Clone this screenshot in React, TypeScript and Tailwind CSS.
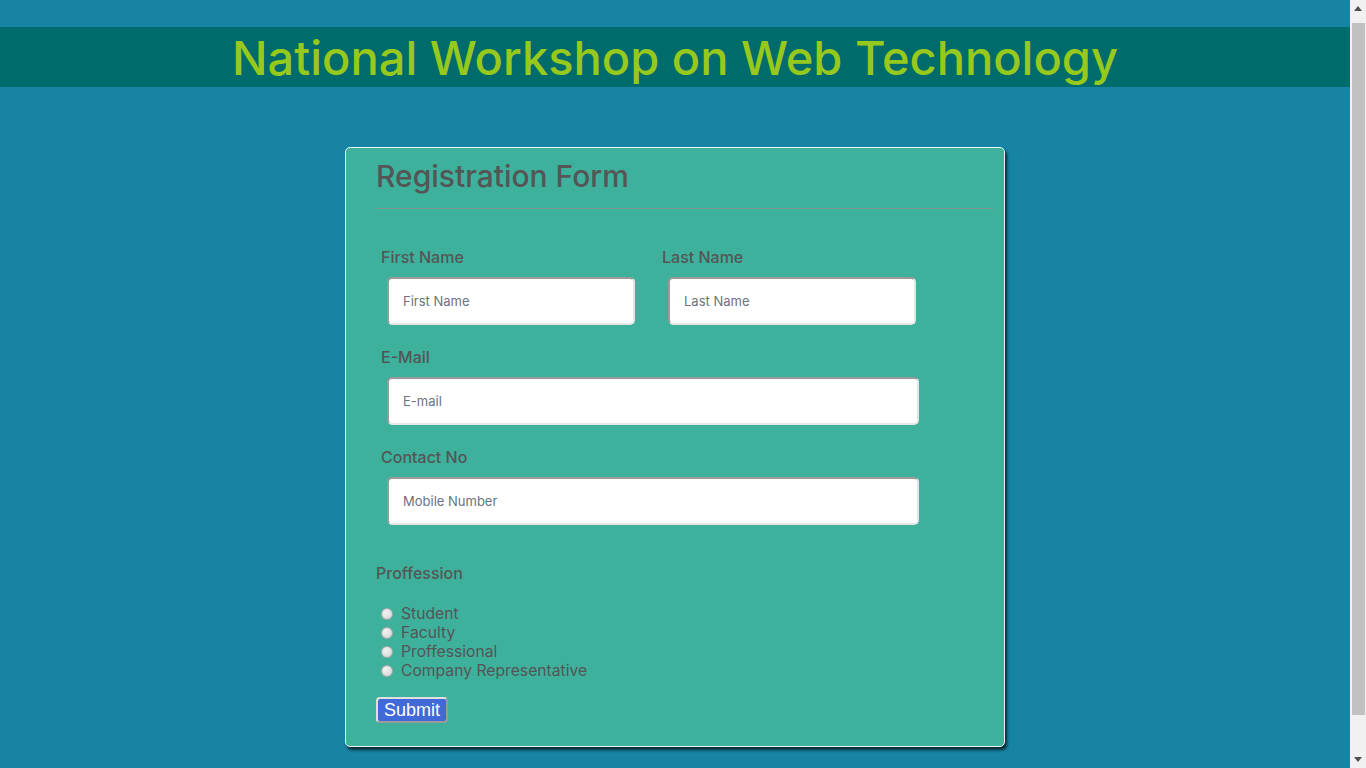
import React from 'react'

const labelCls = "block text-[16px] leading-[20px] font-medium text-[#555555] ml-[5px]"
const inputCls = "h-[48px] rounded-[5px] bg-white border-2 border-t-[#9a9a9a] border-l-[#9a9a9a] border-b-[#e6e6e6] border-r-[#e6e6e6] px-[14px] text-[13px] text-[#333] placeholder:text-[#6b7280] outline-none"

function Radio({ label }: { label: string }) {
  return (
    <label className="flex items-center h-[19px] ml-[5px]">
      <span className="w-[12px] h-[12px] rounded-full border border-[#a9a9a9] bg-[radial-gradient(circle_at_40%_35%,#f4f4f4,#cfcfcf)] mr-[8px]" />
      <span className="text-[15.7px] text-[#555555]">{label}</span>
    </label>
  )
}

function Scrollbar() {
  return (
    <div className="w-[16px] h-[768px] bg-[#f1f1f1] flex flex-col items-center shrink-0">
      <div className="h-[17px] flex items-center justify-center">
        <svg width="8" height="5" viewBox="0 0 8 5"><path d="M0 5 L4 0 L8 5 Z" fill="#505050" /></svg>
      </div>
      <div className="mt-[6px] w-[13px] h-[692px] bg-[#c1c1c1]" />
      <div className="flex-1" />
      <div className="h-[17px] flex items-center justify-center">
        <svg width="8" height="5" viewBox="0 0 8 5"><path d="M0 0 L8 0 L4 5 Z" fill="#505050" /></svg>
      </div>
    </div>
  )
}

export default function App(){
  return (
    <div className="h-[768px] overflow-hidden flex bg-[#1783a5]" style={{ fontFamily: 'Inter, "Noto Sans", sans-serif' }}>
      <div className="flex-1 min-h-[815px] pt-[27px] pb-[67px]">
        <div className="h-[60px] bg-[#006b6b] flex items-center justify-center">
          <h1 className="text-[47px] leading-none font-medium text-[#97c91c]">National Workshop on Web Technology</h1>
        </div>
        <div className="mt-[60px] mx-auto w-[660px] bg-[#3db19c] border border-[#e8f5f2] rounded-[5px] shadow-[2px_3px_3px_rgba(0,0,0,0.7)] pl-[30px] pr-[11px] pt-[10px] pb-[23px]">
          <h2 className="text-[30px] leading-[36px] font-medium text-[#555555]">Registration Form</h2>
          <div className="mt-[14px] border-t border-[#7a9a8e]" />
          <div className="mt-[38px] flex gap-[22px]">
            <div>
              <span className={labelCls}>First Name</span>
              <input className={inputCls + " mt-[10px] ml-[11px] w-[248px]"} placeholder="First Name" />
            </div>
            <div>
              <span className={labelCls}>Last Name</span>
              <input className={inputCls + " mt-[10px] ml-[11px] w-[248px]"} placeholder="Last Name" />
            </div>
          </div>
          <div className="mt-[22px]">
            <span className={labelCls}>E-Mail</span>
            <input className={inputCls + " block mt-[10px] ml-[11px] w-[532px]"} placeholder="E-mail" />
          </div>
          <div className="mt-[22px]">
            <span className={labelCls}>Contact No</span>
            <input className={inputCls + " block mt-[10px] ml-[11px] w-[532px]"} placeholder="Mobile Number" />
          </div>
          <div className="mt-[38px] text-[16px] leading-[20px] font-medium text-[#555555]">Proffession</div>
          <div className="mt-[21px] flex flex-col">
            <Radio label="Student" />
            <Radio label="Faculty" />
            <Radio label="Proffessional" />
            <Radio label="Company Representative" />
          </div>
          <button className="mt-[17px] h-[26px] px-[6px] rounded-[4px] bg-[#4169d8] border-2 border-t-[#e0e0e0] border-l-[#e0e0e0] border-b-[#9a9a9a] border-r-[#9a9a9a] text-white text-[18px] leading-none" style={{ fontFamily: '"Liberation Sans", Arial, sans-serif' }}>Submit</button>
        </div>
      </div>
      <Scrollbar />
    </div>
  )
}
